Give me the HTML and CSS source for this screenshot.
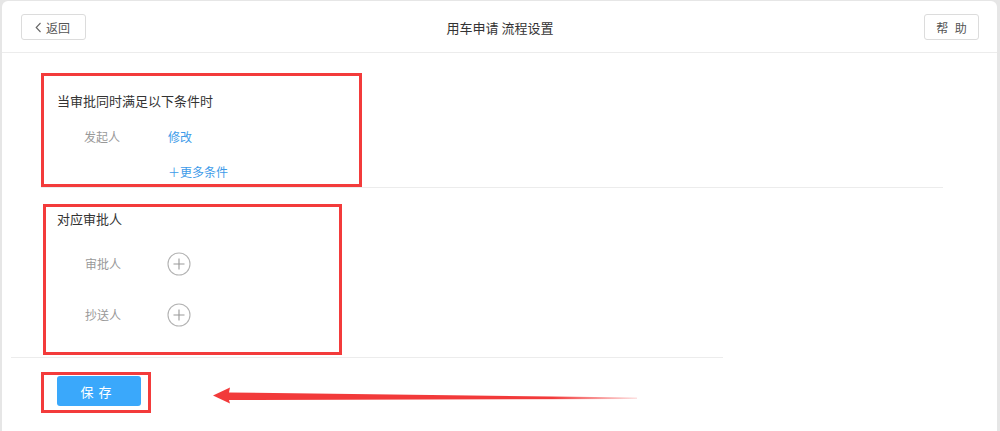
FILE: index.html
```html
<!DOCTYPE html>
<html lang="zh-CN">
<head>
<meta charset="utf-8">
<title>用车申请 流程设置</title>
<link rel="stylesheet" href="styles.css">
</head>
<body>
<div class="card">
  <header class="header">
    <div class="left">
      <button class="btn back"><svg class="chev" width="7" height="11" viewBox="0 0 7 11"><path d="M5.5 1 L1.2 5.5 L5.5 10" fill="none" stroke="#666" stroke-width="1.1"/></svg><span>返回</span></button>
    </div>
    <h1 class="title">用车申请 流程设置</h1>
    <div class="right">
      <button class="btn help">帮 助</button>
    </div>
  </header>

  <main class="content">
    <section class="group group-cond">
      <div class="mark box-cond">
        <h2 class="sec-title">当审批同时满足以下条件时</h2>
        <div class="row row-first">
          <span class="label">发起人</span>
          <a class="link">修改</a>
        </div>
        <div class="row row-more">
          <span class="label"></span>
          <a class="link">＋更多条件</a>
        </div>
      </div>
    </section>

    <section class="group group-appr">
      <div class="mark box-appr">
        <h2 class="sec-title">对应审批人</h2>
        <div class="row row-a1">
          <span class="label">审批人</span>
          <span class="add"><svg width="24" height="24" viewBox="0 0 24 24"><circle cx="12" cy="12" r="11" fill="none" stroke="#b3b3b3" stroke-width="1.1"/><path d="M6.5 12 H17.5 M12 6.5 V17.5" stroke="#999" stroke-width="1.1"/></svg></span>
        </div>
        <div class="row row-a2">
          <span class="label">抄送人</span>
          <span class="add"><svg width="24" height="24" viewBox="0 0 24 24"><circle cx="12" cy="12" r="11" fill="none" stroke="#b3b3b3" stroke-width="1.1"/><path d="M6.5 12 H17.5 M12 6.5 V17.5" stroke="#999" stroke-width="1.1"/></svg></span>
        </div>
      </div>
    </section>

    <div class="save-area">
      <div class="mark box-save">
        <button class="save">保 存</button>
      </div>
    </div>
  </main>

  <svg class="arrow" width="440" height="24" viewBox="0 0 440 24">
    <defs>
      <linearGradient id="fade" x1="0" y1="0" x2="1" y2="0">
        <stop offset="0" stop-color="#f23a3a"/>
        <stop offset="0.8" stop-color="#f23a3a"/>
        <stop offset="1" stop-color="#f23a3a" stop-opacity="0.15"/>
      </linearGradient>
    </defs>
    <polygon points="1,10.5 18,2.5 17,7.5 425,12.5 425,14 17,15 18,18.5" fill="url(#fade)"/>
  </svg>
</div>
</body>
</html>
```

FILE: styles.css
```css
* { box-sizing: border-box; }
html, body { margin: 0; height: 100%; }
body {
  background: #e6e6e6;
  padding: 1px 3px 0 2px;
  overflow: hidden;
  font-family: "Noto Sans CJK SC", "Noto Sans", "Liberation Sans", sans-serif;
  color: #333;
}
.card {
  position: relative;
  background: #fff;
  border-radius: 6px 6px 0 0;
  height: 430px;
}
.header {
  height: 52px;
  border-bottom: 1px solid #ececec;
  display: grid;
  grid-template-columns: 1fr auto 1fr;
  align-items: start;
  padding: 13px 18px 0 19px;
}
.right { display: flex; justify-content: flex-end; }
.btn {
  height: 26px;
  background: #fff;
  border: 1px solid #dcdcdc;
  border-radius: 3px;
  font-family: inherit;
  font-size: 12px;
  color: #555;
  padding: 0;
  display: flex;
  align-items: center;
  justify-content: center;
}
.back { width: 65px; gap: 4px; }
.back .chev { margin-left: -2px; }
.help { width: 55px; letter-spacing: 2px; padding-left: 2px; }
.title {
  margin: 0;
  font-size: 13px;
  font-weight: normal;
  line-height: 28px;
  color: #333;
}
.content { padding-top: 20px; }
.group-cond {
  margin-left: 39px;
  width: 902px;
  border-bottom: 1px solid #ececec;
}
.mark { border: 3px solid #f33b3b; }
.box-cond {
  width: 321px;
  padding: 15px 13px 2px;
}
.sec-title {
  margin: 0;
  font-size: 13px;
  font-weight: normal;
  line-height: 20px;
  color: #333;
}
.row {
  display: flex;
  align-items: center;
  font-size: 12px;
  line-height: 20px;
}
.box-cond .row { padding-left: 27px; }
.box-cond .label { width: 84px; }
.row-first { margin-top: 16px; }
.row-more { margin-top: 15px; }
.label { color: #999; }
.link { color: #3d9be9; cursor: pointer; }
.group-appr {
  margin-left: 9px;
  width: 712px;
  padding: 16px 0 2px;
  border-bottom: 1px solid #ececec;
}
.box-appr {
  margin-left: 32px;
  width: 299px;
  padding: 2px 11px 25px;
}
.box-appr .row { padding-left: 28px; height: 24px; }
.box-appr .label { width: 82px; }
.row-a1 { margin-top: 23px; }
.row-a2 { margin-top: 27px; }
.add { display: flex; }
.save-area {
  margin-left: 39px;
  margin-top: 14px;
}
.box-save {
  display: inline-block;
  padding: 1px 7px 4px 13px;
}
.save {
  display: block;
  width: 84px;
  height: 30px;
  border: none;
  border-radius: 3px;
  background: #3aa8fb;
  color: #fff;
  font-family: inherit;
  font-size: 13px;
  letter-spacing: 1px;
  padding-left: 1px;
}
.arrow {
  position: absolute;
  left: 210px;
  top: 384px;
}
```
